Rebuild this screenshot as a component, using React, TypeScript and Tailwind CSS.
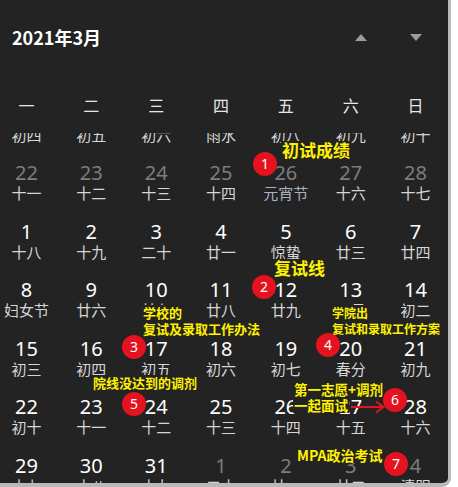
import React from "react";

type Cell = { d: number; l: string; o?: boolean; f?: boolean };

const rows: Cell[][] = [
  [
    { d: 15, l: "初四", o: true },
    { d: 16, l: "初五", o: true },
    { d: 17, l: "初六", o: true },
    { d: 18, l: "雨水", o: true },
    { d: 19, l: "初八", o: true },
    { d: 20, l: "初九", o: true },
    { d: 21, l: "初十", o: true },
  ],
  [
    { d: 22, l: "十一", o: true },
    { d: 23, l: "十二", o: true },
    { d: 24, l: "十三", o: true },
    { d: 25, l: "十四", o: true },
    { d: 26, l: "元宵节", o: true, f: true },
    { d: 27, l: "十六", o: true },
    { d: 28, l: "十七", o: true },
  ],
  [
    { d: 1, l: "十八" },
    { d: 2, l: "十九" },
    { d: 3, l: "二十" },
    { d: 4, l: "廿一" },
    { d: 5, l: "惊蛰" },
    { d: 6, l: "廿三" },
    { d: 7, l: "廿四" },
  ],
  [
    { d: 8, l: "妇女节" },
    { d: 9, l: "廿六" },
    { d: 10, l: "廿七" },
    { d: 11, l: "廿八" },
    { d: 12, l: "廿九" },
    { d: 13, l: "二月" },
    { d: 14, l: "初二" },
  ],
  [
    { d: 15, l: "初三" },
    { d: 16, l: "初四" },
    { d: 17, l: "初五" },
    { d: 18, l: "初六" },
    { d: 19, l: "初七" },
    { d: 20, l: "春分" },
    { d: 21, l: "初九" },
  ],
  [
    { d: 22, l: "初十" },
    { d: 23, l: "十一" },
    { d: 24, l: "十二" },
    { d: 25, l: "十三" },
    { d: 26, l: "十四" },
    { d: 27, l: "十五" },
    { d: 28, l: "十六" },
  ],
  [
    { d: 29, l: "十七" },
    { d: 30, l: "十八" },
    { d: 31, l: "十九" },
    { d: 1, l: "二十", o: true },
    { d: 2, l: "廿一", o: true },
    { d: 3, l: "廿二", o: true },
    { d: 4, l: "清明", o: true },
  ],
];

const weekdays = ["一", "二", "三", "四", "五", "六", "日"];

const FONT = { fontFamily: '"Noto Sans", "Noto Sans CJK SC", sans-serif' };
const CJK = { fontFamily: '"Noto Sans CJK SC", "Noto Sans", sans-serif' };

function Badge({ n, className }: { n: number; className: string }) {
  return (
    <div
      className={`absolute w-[24px] h-[24px] rounded-full bg-[#e5121f] text-white text-[14px] leading-[24px] text-center ${className}`}
      style={FONT}
    >
      {n}
    </div>
  );
}

export default function App() {
  return (
    <div className="w-[458px] h-[487px] bg-white overflow-hidden">
      <div
        className="relative w-[451px] h-[487px] bg-[#232323] border-r-[3px] border-b-[4px] border-[#b9b9b9] rounded-br-[9px] overflow-hidden flex flex-col"
        style={FONT}
      >
        {/* Header */}
        <div className="h-[74px] shrink-0 flex items-center pl-[12px]">
          <div className="text-[18px] font-semibold text-white leading-[22px]" style={CJK}>
            2021年3月
          </div>
          <div className="flex-1" />
          <svg width="12" height="7" viewBox="0 0 12 7" className="mr-[43px]">
            <path d="M6 0 L12 7 L0 7 Z" fill="#9c9c9c" />
          </svg>
          <svg width="12" height="7" viewBox="0 0 12 7" className="mr-[26px]">
            <path d="M0 0 L12 0 L6 7 Z" fill="#9c9c9c" />
          </svg>
        </div>

        {/* Weekdays */}
        <div className="h-[59px] shrink-0 pt-[20px] w-[454px] -ml-[6px] grid grid-cols-7 content-start">
          {weekdays.map((w) => (
            <div key={w} className="text-center text-[16px] leading-[22px] text-[#e6e6e6]" style={CJK}>
              {w}
            </div>
          ))}
        </div>

        {/* Days */}
        <div className="flex-1 overflow-hidden">
          <div className="-mt-[37.5px] w-[454px] -ml-[6px]">
            {rows.map((r, i) => (
              <div key={i} className="grid grid-cols-7 h-[58.5px] pt-[8px]">
                {r.map((c, j) => (
                  <div key={j} className="flex flex-col items-center">
                    <div
                      className={`text-[20px] leading-[22px] ${c.o ? "text-[#7d7d7d]" : "text-white"}`}
                    >
                      {c.d}
                    </div>
                    <div
                      className={`text-[15px] leading-[18px] ${c.f ? "text-[#a9b2bf]" : "text-[#d6d6d6]"}`}
                      style={CJK}
                    >
                      {c.l}
                    </div>
                  </div>
                ))}
              </div>
            ))}
          </div>
        </div>

        {/* Annotations */}
        <div className="absolute left-[281px] top-[141px] px-[1px] bg-[#232323] text-[17px] leading-[18px] font-bold text-[#fff200] whitespace-nowrap" style={CJK}>
          初试成绩
        </div>
        <Badge n={1} className="left-[253px] top-[152px]" />

        <div className="absolute left-[273px] top-[259px] px-[1px] bg-[#232323] text-[17px] leading-[18px] font-bold text-[#fff200] whitespace-nowrap" style={CJK}>
          复试线
        </div>
        <Badge n={2} className="left-[252px] top-[275px]" />

        <div className="absolute left-[142px] top-[305px] flex flex-col items-start text-[13px] leading-[16px] font-bold text-[#fff200] whitespace-nowrap" style={CJK}>
          <span className="bg-[#232323] px-[1px]">学校的</span>
          <span className="bg-[#232323] px-[1px]">复试及录取工作办法</span>
        </div>
        <Badge n={3} className="left-[122px] top-[335px]" />

        <div className="absolute left-[331px] top-[305px] flex flex-col items-start text-[12px] leading-[15.5px] font-bold text-[#fff200] whitespace-nowrap" style={CJK}>
          <span className="bg-[#232323] px-[1px]">学院出</span>
          <span className="bg-[#232323] px-[1px]">复试和录取工作方案</span>
        </div>
        <Badge n={4} className="left-[316px] top-[333px]" />

        <div className="absolute left-[92px] top-[375px] px-[1px] bg-[#232323] text-[13px] leading-[15px] font-bold text-[#fff200] whitespace-nowrap" style={CJK}>
          院线没达到的调剂
        </div>
        <Badge n={5} className="left-[122px] top-[392px]" />

        <div className="absolute left-[293px] top-[381px] flex flex-col items-start text-[13.5px] leading-[16px] font-bold text-[#fff200] whitespace-nowrap" style={CJK}>
          <span className="bg-[#232323] px-[1px]">第一志愿+调剂</span>
          <span className="bg-[#232323] px-[1px]">一起面试</span>
        </div>
        <svg className="absolute left-[350px] top-[400px]" width="36" height="14" viewBox="0 0 36 14">
          <path d="M1 7 H33" stroke="#e5121f" strokeWidth="2" />
          <path d="M26 1.5 L33.5 7 L26 12.5" stroke="#e5121f" strokeWidth="2" fill="none" />
        </svg>
        <Badge n={6} className="left-[383px] top-[388px]" />

        <div className="absolute left-[296px] top-[447px] px-[1px] bg-[#232323] text-[14px] leading-[16px] font-bold text-[#fff200] whitespace-nowrap" style={CJK}>
          MPA政治考试
        </div>
        <Badge n={7} className="left-[384px] top-[452px]" />
      </div>
    </div>
  );
}
